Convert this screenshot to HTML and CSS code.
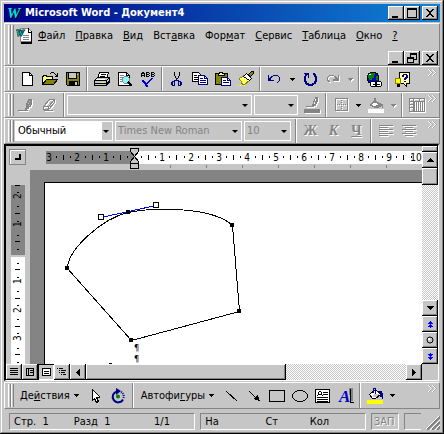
FILE: index.html
```html
<!DOCTYPE html>
<html lang="ru">
<head>
<meta charset="utf-8">
<title>Microsoft Word - Документ4</title>
<link rel="stylesheet" href="styles.css">
</head>
<body>
<div class="window">
  <header class="title">
    <svg class="logo" width="18" height="16" viewBox="0 0 18 16"><text x="2" y="14" class="w-shadow">W</text><text x="1" y="13" class="w-face">W</text></svg>
    <h1>Microsoft Word - Документ4</h1>
    <button class="cap" aria-label="Свернуть"><svg width="12" height="10"><path d="M2 8h6v2H2z"/></svg></button>
    <button class="cap" aria-label="Развернуть"><svg width="12" height="10"><path fill-rule="evenodd" d="M1 0h10v10H1zM2 2v7h8V2z"/></svg></button>
    <button class="cap close" aria-label="Закрыть"><svg width="12" height="10"><path d="M2 1h2v1h1v1h2V2h1V1h2v1H9v1H8v1H7v2h1v1h1v1h1v1H8V8H7V7H5v1H4v1H2V8h1V7h1V6h1V4H4V3H3V2H2z"/></svg></button>
  </header>

  <nav class="band menu-band">
    <span class="grip"></span>
    <div class="menu-rows">
      <div class="menu">
        <svg class="docicon" width="17" height="17" viewBox="0 0 17 17"><path fill="#fff" stroke="#848484" d="M4.500 1.500h8l3 3v10h-11z"/><path d="M12 1v4h4M15 4v12H5v-1h10" fill="none" stroke="#000"/><path stroke="#848484" d="M7 8.500h6M7 10.500h6M7 12.500h6"/><text x="0" y="9" class="w-small">W</text></svg>
        <button><u>Ф</u>айл</button><button><u>П</u>равка</button><button><u>В</u>ид</button><button>Вст<u>а</u>вка</button><button>Фор<u>м</u>ат</button><button><u>С</u>ервис</button><button><u>Т</u>аблица</button><button><u>О</u>кно</button><button><u>?</u></button>
      </div>
      <div class="mdi">
        <button class="cap" aria-label="Свернуть документ"><svg width="12" height="10"><path d="M2 8h6v2H2z"/></svg></button>
        <button class="cap" aria-label="Восстановить документ"><svg width="12" height="10"><path fill-rule="evenodd" d="M4 0h7v7H8v3H1V4h3zM5 2v2h3v2h2V2zM2 6v3h5V6z"/></svg></button>
        <button class="cap close" aria-label="Закрыть документ"><svg width="12" height="10"><path d="M2 1h2v1h1v1h2V2h1V1h2v1H9v1H8v1H7v2h1v1h1v1h1v1H8V8H7V7H5v1H4v1H2V8h1V7h1V6h1V4H4V3H3V2H2z"/></svg></button>
      </div>
    </div>
  </nav>

  <div class="band" role="toolbar" aria-label="Стандартная">
    <span class="grip"></span>
    <button class="tb" aria-label="Создать"><svg width="18" height="16"><path fill="#fff" stroke="#000" d="M4.500 1.500h7l3 3v10h-10z"/><path fill="none" stroke="#000" d="M11.500 1v3.500H15"/></svg></button>
    <button class="tb" aria-label="Открыть"><svg width="18" height="16"><path fill="#ffff80" stroke="#000" d="M1.500 13.500v-8h1v-1h3v1h6v3h5l-4 5z"/><path fill="#848400" stroke="#000" d="M1.500 13.500l4-5h11l-4 5z"/><path fill="none" stroke="#000" d="M9 2.500h1M10 1.500h3M13 2.500h1M14 3.500h1M15 4.500h1M14 5.500h2M16.500 2v4"/></svg></button>
    <button class="tb" aria-label="Сохранить"><svg width="18" height="16"><path fill="#848400" stroke="#000" d="M2.500 1.500h13v13h-12l-1-1z"/><path fill="#c6c6c6" stroke="#000" d="M4.500 1.500h8v6h-8z"/><path d="M5 10h9v5H5z"/><path fill="#c6c6c6" d="M11 11h2v3h-2zM13 3h1v1h-1z"/></svg></button>
    <span class="sep"></span>
    <button class="tb" aria-label="Печать"><svg width="18" height="16"><path fill="#fff" stroke="#000" d="M6.500 1.500h9l-2 6h-9z"/><path stroke="#000" d="M8 3.500h5M7 5.500h5"/><path fill="#c6c6c6" stroke="#000" d="M1.500 9.500l3-3h12v5l-3 3h-12z"/><path fill="none" stroke="#000" d="M1 9.500h12.500v5M13.500 9.500l3-3M1 12.500h12M14 12.500l3-3"/><path fill="#ffff00" d="M8 11h3v1H8z"/><path fill="#fff" d="M3 8h9v1H3z"/></svg></button>
    <button class="tb" aria-label="Предварительный просмотр"><svg width="18" height="17"><path fill="#fff" stroke="#000" d="M2.500 1.500h8l3 3v10h-11z"/><path fill="none" stroke="#000" d="M10.500 1v3.500H14"/><path stroke="#848484" d="M4 4.500h4M4 6.500h3M4 8.500h2M4 10.500h2"/><circle cx="10" cy="9" r="3.500" fill="#84ffff" stroke="#848484"/><path stroke="#000" stroke-width="2" d="M12 11l4 4"/></svg></button>
    <button class="tb" aria-label="Орфография"><svg width="18" height="17"><path fill="none" stroke="#000" d="M2.500 6V2.500h1v-1h1v1h1V6M2 4.500h4M7.500 1v5M7 1.500h3M7 3.500h3M7 5.500h3M10.500 2v1M10.500 4v1M12.500 1v5M12 1.500h3M12 3.500h3M12 5.500h3M15.500 2v1M15.500 4v1"/><path fill="#0000ce" d="M3 9h2v1h1v1h1v1h1v-1h1v-1h1V9h1V8h1V7h2v1h-1v1h-1v1h-1v1h-1v1h-1v1h-1v1H9v2H7v-1H6v-2H5v-1H4v-1H3z"/></svg></button>
    <span class="sep"></span>
    <button class="tb" aria-label="Вырезать"><svg width="18" height="16"><path fill="none" stroke="#000" d="M6.500 1v3l1 2 1 2M11.500 1v3l-1 2-2 3"/><path fill="none" stroke="#000084" d="M8.500 7v3M7.500 9l-1 1M9.500 9l1 1M4.500 10.500h2v4h-2zM10.500 10.500h2v4h-2zM3.500 11v3M13.500 11v3"/></svg></button>
    <button class="tb" aria-label="Копировать"><svg width="18" height="16"><path fill="#fff" stroke="#000" d="M1.500 1.500h6l2 2v7h-8z"/><path stroke="#000" d="M3 4.500h3M3 6.500h4M3 8.500h4"/><path fill="#fff" stroke="#000084" d="M7.500 4.500h6l3 3v6h-9z"/><path fill="none" stroke="#000084" d="M13.500 4v3.500H17M9 7.500h3M9 9.500h6M9 11.500h6"/></svg></button>
    <button class="tb" aria-label="Вставить"><svg width="18" height="16"><path fill="#848400" stroke="#000" d="M1.500 2.500h12v11h-12z"/><path fill="#ffff80" stroke="#000" d="M4.500 3.500v-1h1v-1h3v1h2v2h-6z"/><path fill="#fff" stroke="#000084" d="M7.500 6.500h6l3 3v5h-9z"/><path fill="none" stroke="#000084" d="M13.500 6v3.500H17M9 9.500h3M9 11.500h6"/></svg></button>
    <button class="tb" aria-label="Формат по образцу"><svg width="18" height="16"><path fill="#ffff84" stroke="#848400" d="M2.500 7.500l5-3 5 5-5 4h-2z"/><path fill="#fff" stroke="#000" d="M6.500 5.500l3-3 5 5-2 2z"/><path fill="#848400" stroke="#000" d="M11.500 3.500l3-3h2v2l-3 3z"/><path stroke="#ff0" stroke-dasharray="1 1" d="M3 8.500h7M3 10.500h7M1 14.500h7"/></svg></button>
    <span class="sep"></span>
    <button class="tb" aria-label="Отменить"><svg width="18" height="16"><path fill="#000084" d="M2 4h1v3h1V6h1V5h2V4h5v1h1v1h1v4h-1v1h-1v1h-1v-1h1v-1h1V6h-1V5H7v1H6v1H5v2h3v1H2z"/></svg></button>
    <button class="dd" aria-label="Список отмены"><svg width="5" height="3"><path d="M0 0h5L2.500 3z"/></svg></button>
    <button class="tb" aria-label="Повторить"><svg width="18" height="16"><path fill="#000084" d="M3 2h5v5H7V4H6v1H5v5h1v2h2v1h3v-1h2v-2h1V6h-1V4h-1V2h2v1h1v2h1v6h-1v2h-2v1h-1v1H7v-1H5v-1H4v-2H3V5h1V3H3z"/></svg></button>
    <button class="tb" aria-label="Вернуть" disabled><svg class="dis" width="18" height="16"><path d="M15 4h-1v3h-1V6h-1V5h-2V4H5v1H4v1H3v4h1v1h2v-1H5V9H4V6h1V5h5v1h1v2h-2v2h6z"/></svg></button>
    <button class="dd" aria-label="Список возврата" disabled><svg class="dis" width="5" height="3"><path d="M0 0h5L2.500 3z"/></svg></button>
    <span class="sep"></span>
    <button class="tb" aria-label="Гиперссылка"><svg width="18" height="17"><circle cx="8" cy="7" r="6" fill="#0000ce" stroke="#000"/><path fill="#008400" d="M5 2h5v2H9v3H7v2H4V7H3V4h2zM11 5h2v4h-2zM7 10h3v2H7z"/><path fill="#fff" d="M4 3h2v1H4z"/><path fill="#fff" stroke="#000" d="M5.500 11.500l1-1h4l1 1v3l-1 1h-4l-1-1zM10.500 11.500l1-1h4l1 1v3l-1 1h-4l-1-1z"/><path stroke="#000" d="M8 13.500h7"/></svg></button>
    <span class="sep"></span>
    <button class="tb" aria-label="Справка"><svg width="18" height="17"><path fill="#ffffb0" stroke="#000" d="M5.500 1.500h10v11h-3v3l-3-3h-4z"/><path fill="#000084" d="M9 3h4v1h1v3h-1v1h-1v1h-2V7h1V6h1V4h-2v2H8V4h1zM10 10h2v1h-2z"/><circle cx="4" cy="10" r="3" fill="#ff0" stroke="#848400"/><path d="M3 13h3v3H3z"/></svg></button>
    <button class="more" aria-label="Другие кнопки"><svg width="9" height="7"><path d="M0 0h1v1h1v1h1v1h1v1H3v1H2v1H1v1H0V6h1V5h1V4h1V3H2V2H1V1H0zM4 0h1v1h1v1h1v1h1v1H7v1H6v1H5v1H4V6h1V5h1V4h1V3H6V2H5V1H4z"/></svg></button>
  </div>

  <div class="band" role="toolbar" aria-label="Таблицы и границы">
    <span class="grip"></span>
    <button class="tb" aria-label="Нарисовать таблицу" disabled><svg class="dis" width="18" height="16"><path d="M11 2h4v6h-1v2h-2v2h-2v-1H9V6h1V4h1zM1 13h10v1H1zM8 11h2v2H8z"/><path fill="#c6c6c6" d="M12 4h1v1h-1zM11 6h1v1h-1zM12 8h1v1h-1z"/></svg></button>
    <button class="tb" aria-label="Ластик" disabled><svg class="dis" width="18" height="16"><path fill="none" stroke="#848484" d="M3.500 9.500l6-7h5v3l-6 7h-5zM3.500 9.500h5v3M8.500 9.500l6-7M4 13.500h9"/></svg></button>
    <span class="sep"></span>
    <span class="combo c-line"><select aria-label="Тип линии"><option></option></select></span>
    <span class="combo c-weight"><select aria-label="Толщина линии"><option></option></select></span>
    <button class="tb" aria-label="Цвет границы" disabled><svg class="dis" width="18" height="16"><path d="M12 0h3v5h-1v2h-1v2h-2v1H9V7h1V4h1V2h1zM3 9h6v1H3zM1 12h16v4H1z"/><path fill="#fff" d="M12 2h1v2h-1zM11 5h1v2h-1z"/></svg></button>
    <span class="sep"></span>
    <button class="tb" aria-label="Внешняя граница" disabled><svg class="dis" width="18" height="16"><path fill="none" stroke="#848484" d="M3.500 1.500h12v12h-12z"/><path stroke="#848484" stroke-dasharray="1 1" d="M9.500 3v10M5 7.500h10"/></svg></button>
    <button class="dd" aria-label="Выбор границы"><svg width="5" height="3"><path d="M0 0h5L2.500 3z"/></svg></button>
    <button class="tb" aria-label="Цвет заливки" disabled><svg width="18" height="17"><path fill="#848484" d="M7 1h2v3h1v1h2v1h2v1h2v4h-1V9h-1v1h-2v1h-5v-1H5V9H3V7h1V6h1V5h1V4h1z"/><path fill="#fff" d="M6 6h4v1h1v1H9v1H6V8H5V7h1zM1 12h16v4H1z"/></svg></button>
    <button class="dd" aria-label="Выбор заливки" disabled><svg class="dis" width="5" height="3"><path d="M0 0h5L2.500 3z"/></svg></button>
    <span class="sep"></span>
    <button class="tb" aria-label="Добавить таблицу" disabled><svg class="dis" width="18" height="16"><path fill="none" stroke="#848484" d="M1.500 1.500h15v13h-15zM1 4.500h15M5.500 1v13M11.500 1v4M1 7.500h4M1 10.500h4"/><path stroke="#848484" stroke-width="9" stroke-dasharray="1 1" d="M6 9.500h10"/></svg></button>
    <button class="more" aria-label="Другие кнопки"><svg width="9" height="7"><path d="M0 0h1v1h1v1h1v1h1v1H3v1H2v1H1v1H0V6h1V5h1V4h1V3H2V2H1V1H0zM4 0h1v1h1v1h1v1h1v1H7v1H6v1H5v1H4V6h1V5h1V4h1V3H6V2H5V1H4z"/></svg></button>
  </div>

  <div class="band" role="toolbar" aria-label="Форматирование">
    <span class="grip"></span>
    <span class="combo c-style on"><select aria-label="Стиль"><option>Обычный</option></select></span>
    <span class="combo c-font"><select aria-label="Шрифт" disabled><option>Times New Roman</option></select></span>
    <span class="combo c-size"><select aria-label="Размер" disabled><option>10</option></select></span>
    <span class="sep"></span>
    <button class="tb letter" disabled><b>Ж</b></button>
    <button class="tb letter" disabled><i>К</i></button>
    <button class="tb letter" disabled><u>Ч</u></button>
    <span class="sep"></span>
    <button class="tb" aria-label="По левому краю" disabled><svg class="dis" width="18" height="16"><path stroke="#848484" d="M2 2.500h14M2 4.500h9M2 6.500h14M2 8.500h9M2 10.500h14M2 12.500h9"/></svg></button>
    <button class="tb" aria-label="По центру" disabled><svg class="dis" width="18" height="16"><path stroke="#848484" d="M2 2.500h14M5 4.500h8M2 6.500h14M5 8.500h8M2 10.500h14M5 12.500h8"/></svg></button>
    <button class="more" aria-label="Другие кнопки"><svg width="9" height="7"><path d="M0 0h1v1h1v1h1v1h1v1H3v1H2v1H1v1H0V6h1V5h1V4h1V3H2V2H1V1H0zM4 0h1v1h1v1h1v1h1v1H7v1H6v1H5v1H4V6h1V5h1V4h1V3H6V2H5V1H4z"/></svg></button>
  </div>

  <main class="doc">
    <div class="corner"><button aria-label="Табуляция"><svg width="6" height="6"><path d="M4 0h2v6H0V4h4z"/></svg></button></div>
    <div class="hruler">
      <svg width="100%" height="24">
        <path fill="#848484" d="M16 5h89v13H16z"/><rect x="105" y="5" width="100%" height="13" fill="#fff"/>
        <path stroke="#000" d="M33.500 9v5M62.500 9v5M90.500 9v5M118.500 9v5M146.500 9v5M175.500 9v5M203.500 9v5M232.500 9v5M260.500 9v5M288.500 9v5M317.500 9v5M345.500 9v5M373.500 9v5"/>
        <path stroke="#000" stroke-width="2" d="M26 11h1M40 11h1M55 11h1M69 11h1M83 11h1M97 11h1M111 11h1M125 11h1M139 11h1M154 11h1M168 11h1M182 11h1M196 11h1M210 11h1M225 11h1M239 11h1M253 11h1M267 11h1M281 11h1M295 11h1M310 11h1M324 11h1M338 11h1M352 11h1M366 11h1M381 11h1"/>
        <path stroke="#848484" d="M140.500 19v3M176.500 19v3M212.500 19v3M248.500 19v3M284.500 19v3M320.500 19v3M356.500 19v3"/>
        <g class="num"><text x="19" y="15">3</text><text x="47" y="15">2</text><text x="76" y="15">1</text><text x="132" y="15">1</text><text x="161" y="15">2</text><text x="189" y="15">3</text><text x="217" y="15">4</text><text x="246" y="15">5</text><text x="274" y="15">6</text><text x="302" y="15">7</text><text x="331" y="15">8</text><text x="359" y="15">9</text><text x="386" y="15">10</text></g>
        <path fill="#c6c6c6" stroke="#000" d="M100.500 2.500h8v3l-4 5-4-5zM104.500 10.500l4 5v7h-8v-7zM100.500 17.500h8"/>
      </svg>
    </div>
    <div class="vruler">
      <svg width="24" height="100%">
        <path fill="#848484" d="M5 15h14v70H5z"/><rect x="5" y="87" width="14" height="100%" fill="#fff"/>
        <path stroke="#000" d="M9 15.500h5M9 43.500h5M9 71.500h5M9 99.500h5M9 128.500h5M9 156.500h5M9 184.500h5"/>
        <path stroke="#000" d="M11 22.500h2M11 36.500h2M11 51.500h2M11 65.500h2M11 79.500h2M11 93.500h2M11 107.500h2M11 121.500h2M11 135.500h2M11 149.500h2M11 163.500h2M11 178.500h2M11 192.500h2"/>
        <g class="num"><text transform="translate(15 29) rotate(-90)">2</text><text transform="translate(15 57) rotate(-90)">1</text><text transform="translate(15 114) rotate(-90)">1</text><text transform="translate(15 143) rotate(-90)">2</text><text transform="translate(15 171) rotate(-90)">3</text></g>
      </svg>
    </div>
    <div class="page-area">
      <div class="page">
        <svg class="drawing" width="100%" height="100%">
          <path fill="none" stroke="#000" d="M22.500 85.500C22.500 67 56 36 83 29.500C111 24 168 24 187.500 42.500L194.500 128.500L86.500 157.500z"/>
          <path stroke="#00f" d="M56 34.500L111 22.500"/>
          <path d="M20 83h4v4h-4zM81 27h4v4h-4zM185 40h4v4h-4zM192 126h4v4h-4zM84 155h4v4h-4z"/>
          <path fill="#fff" stroke="#000" d="M53.500 31.500h5v5h-5zM108.500 19.500h5v5h-5z"/>
          <text x="89" y="168" class="pil">¶</text><text x="89" y="179" class="pil">¶</text>
          <path fill="none" stroke="#000" d="M63 181.500h1M64 180.500h3M67 181.500h1"/>
        </svg>
      </div>
    </div>
    <div class="vscroll">
      <span class="split"></span>
      <button aria-label="Вверх"><svg width="7" height="4"><path d="M3 0h1v1h1v1h1v1h1v1H0V3h1V2h1V1h1z"/></svg></button>
      <span class="thumb"></span>
      <span class="track"></span>
      <button aria-label="Вниз"><svg width="7" height="4"><path d="M0 0h7v1H6v1H5v1H4v1H3V3H2V2H1V1H0z"/></svg></button>
      <button aria-label="Предыдущая страница"><svg width="5" height="7" fill="#00f"><path d="M2 0h1v1h1v1h1v1H3v1h1v1h1v1H3v1H2V6H0V5h1V4h1V3H0V2h1V1h1z"/></svg></button>
      <button aria-label="Выбор объекта"><svg class="smooth" width="8" height="8"><circle cx="4" cy="4" r="3" fill="#c6c6c6" stroke="#000"/><path fill="#fff" d="M2 2h2v2H2z"/></svg></button>
      <button aria-label="Следующая страница"><svg width="5" height="7" fill="#00f"><path d="M2 7h1V6h1V5h1V4H3V3h1V2h1V1H3V0H2v1H0v1h1v1h1v1H0v1h1v1h1z"/></svg></button>
    </div>
    <div class="hscroll">
      <button aria-label="Обычный режим"><svg width="10" height="10"><path stroke="#000" d="M1 1.500h8M1 3.500h8M1 5.500h8M1 7.500h8"/></svg></button>
      <button aria-label="Веб-документ"><svg width="10" height="10"><path fill="none" stroke="#000" d="M1.500 1.500h7v7h-7zM3.500 1v8M5 3.500h3M5 5.500h3"/></svg></button>
      <button class="pressed" aria-label="Разметка страницы"><svg width="10" height="10"><path fill="#fff" stroke="#000" d="M1.500 1.500h8v7h-8z"/><path stroke="#000" d="M3 4.500h5M3 6.500h5"/></svg></button>
      <button aria-label="Структура"><svg width="10" height="10"><path stroke="#000" d="M0 1.500h1M2 1.500h4M2 3.500h1M4 3.500h5M2 5.500h1M4 5.500h4M4 7.500h1M6 7.500h3"/></svg></button>
      <button aria-label="Влево"><svg width="4" height="7"><path d="M4 0v7H3V6H2V5H1V4H0V3h1V2h1V1h1V0z"/></svg></button>
      <span class="thumb"></span>
      <span class="track"></span>
      <button aria-label="Вправо"><svg width="4" height="7"><path d="M0 0v7h1V6h1V5h1V4h1V3H3V2H2V1H1V0z"/></svg></button>
      <span class="box"></span>
    </div>
  </main>

  <div class="band draw" role="toolbar" aria-label="Рисование">
    <span class="grip"></span>
    <button class="word"><span>Де<u>й</u>ствия</span><svg width="5" height="3"><path d="M0 0h5L2.500 3z"/></svg></button>
    <button class="tb" aria-label="Выбор объектов"><svg width="18" height="16"><path fill="#fff" stroke="#000" d="M6.500 1.500l7 7v1h-3l2 4-2 1-2-4-2 2z"/></svg></button>
    <button class="tb" aria-label="Свободное вращение"><svg class="smooth" width="18" height="16"><path fill="none" stroke="#000084" stroke-width="2" d="M8 3.500a5.500 5.500 0 1 0 6 8"/><path fill="none" stroke="#000084" stroke-width="2" stroke-dasharray="1 1" d="M12 4a5 5 0 0 1 2.500 6"/><path fill="#000084" d="M7 0l5 3-5 4z"/><circle cx="9" cy="8.500" r="2" fill="#008400"/></svg></button>
    <span class="sep"></span>
    <button class="word"><span>Автофи<u>г</u>уры</span><svg width="5" height="3"><path d="M0 0h5L2.500 3z"/></svg></button>
    <button class="tb" aria-label="Линия"><svg width="18" height="16"><path stroke="#000" d="M4 3l11 10"/></svg></button>
    <button class="tb" aria-label="Стрелка"><svg width="18" height="16"><path stroke="#000" d="M4 3l8 8"/><path d="M15 13l-2-6-5 4z"/></svg></button>
    <button class="tb" aria-label="Прямоугольник"><svg width="18" height="16"><path fill="none" stroke="#000" d="M1.500 2.500h15v11h-15z"/></svg></button>
    <button class="tb" aria-label="Овал"><svg width="18" height="16"><ellipse cx="9" cy="8" rx="7.500" ry="5.500" fill="none" stroke="#000"/></svg></button>
    <button class="tb" aria-label="Надпись"><svg width="18" height="16"><path fill="#fff" stroke="#000" d="M1.500 1.500h14v13h-14z"/><path stroke="#000" d="M9 4.500h5M9 6.500h5M3 9.500h11M3 11.500h11M3 13h11"/><path fill="none" stroke="#000" d="M3.500 8l2-5h1l2 5M4 6.500h4"/></svg></button>
    <button class="tb" aria-label="Объект WordArt"><svg width="18" height="17"><path fill="#848484" d="M12 1h4v13h-3z"/><text x="2" y="15" class="art">A</text><path d="M13 2h1v13h3v1h-4z"/></svg></button>
    <span class="sep"></span>
    <button class="tb" aria-label="Цвет заливки"><svg width="18" height="17"><path fill="#fff" stroke="#000" d="M3.500 7.500l6-5 5 5-5 4h-3z"/><path fill="#c6c6c6" d="M8 7h5l-3 3H7z"/><path fill="none" stroke="#000084" d="M7.500 6V1.500h2V7M11 4.500h4l1 2v5"/><path fill="#000084" d="M13 5h3v5h-2V7h-1z"/><path fill="#ff0" d="M1 13h16v4H1z"/></svg></button>
    <button class="dd" aria-label="Выбор заливки"><svg width="5" height="3"><path d="M0 0h5L2.500 3z"/></svg></button>
    <button class="more" aria-label="Другие кнопки"><svg width="9" height="7"><path d="M0 0h1v1h1v1h1v1h1v1H3v1H2v1H1v1H0V6h1V5h1V4h1V3H2V2H1V1H0zM4 0h1v1h1v1h1v1h1v1H7v1H6v1H5v1H4V6h1V5h1V4h1V3H6V2H5V1H4z"/></svg></button>
  </div>

  <footer class="status">
    <div class="pane p-page"><span>Стр.&nbsp; 1</span><span>Разд&nbsp; 1</span><span>1/1</span></div>
    <div class="pane p-pos"><span>На</span><span>Ст</span><span>Кол</span></div>
    <div class="pane p-rec">ЗАП</div>
    <div class="pane p-fix"></div>
    <svg class="sizer" width="14" height="14"><path stroke="#848484" stroke-width="2" d="M1 14L14 1M6 14l8-8M11 14l3-3"/><path stroke="#fff" d="M0 13L13 0M4 14L14 4M9 14l5-5"/></svg>
  </footer>
</div>
</body>
</html>
```
FILE: styles.css
```css
:root {
  --face: #c6c6c6;
  --dark: #848484;
}
* { box-sizing: border-box; }
body {
  margin: 0;
  font: 11px/16px "DejaVu Sans Condensed", "Liberation Sans", sans-serif;
  color: #000;
  background: var(--face);
}
svg { display: block; flex: none; shape-rendering: crispEdges; }
svg.smooth { shape-rendering: auto; }
button {
  margin: 0;
  padding: 0;
  border: 0;
  background: none;
  font: inherit;
  color: inherit;
  flex: none;
}
.window {
  display: flex;
  flex-direction: column;
  height: 100vh;
  padding: 4px;
  background: var(--face);
  box-shadow: inset -1px -1px #000, inset 1px 1px var(--face), inset -2px -2px var(--dark), inset 2px 2px #fff;
}

/* Title bar */
.title {
  display: flex;
  align-items: center;
  height: 18px;
  margin-bottom: 1px;
  padding: 0 2px;
  background: linear-gradient(90deg, #000084, #1084d6);
  color: #fff;
}
.title h1 {
  flex: 1;
  margin: 0 0 0 1px;
  font-size: 11px;
  line-height: 16px;
  white-space: nowrap;
}
.w-shadow, .w-face { font: italic bold 15px "Liberation Serif", serif; }
.w-face { fill: #00e0e0; }
.w-small { font: italic bold 9px "Liberation Serif", serif; fill: #00c0c0; stroke: #000; stroke-width: 1px; paint-order: stroke; }
.cap {
  display: grid;
  place-items: center;
  width: 16px;
  height: 14px;
  background: var(--face);
  box-shadow: inset -1px -1px #000, inset 1px 1px #fff, inset -2px -2px var(--dark);
}
.close { margin-left: 2px; }

/* Tool bands */
.band {
  display: flex;
  align-items: center;
  height: 26px;
  padding-left: 3px;
  border: 1px solid;
  border-color: #fff var(--dark) var(--dark) #fff;
}
.grip {
  width: 6px;
  align-self: stretch;
  margin: 1px 1px 1px 0;
  background: linear-gradient(90deg, #fff 0 1px, var(--face) 1px 2px, var(--dark) 2px 3px, #fff 3px 4px, var(--face) 4px 5px, var(--dark) 5px 6px);
}
.menu-band { height: 43px; }
.menu-rows { flex: 1; align-self: stretch; }
.menu, .mdi { display: flex; align-items: center; }
.menu { height: 23px; }
.menu button { padding: 0 5px; }
.docicon { margin: 0 0 0 1px; }
.mdi { justify-content: flex-end; height: 18px; padding: 4px 1px 0 0; }
.tb {
  display: grid;
  place-items: center;
  width: 23px;
  height: 22px;
}
.dd {
  display: grid;
  place-items: center;
  width: 12px;
  height: 22px;
}
.dis { fill: var(--dark); filter: drop-shadow(1px 1px 0 #fff); }
.sep {
  width: 2px;
  align-self: stretch;
  margin: 0 2px;
  background: linear-gradient(90deg, var(--dark) 50%, #fff 50%);
}
.more {
  align-self: flex-start;
  margin: 2px 2px 0 auto;
}
.more svg { fill: #fff; filter: drop-shadow(1px 0 0 #a5a5a5); }
.combo {
  position: relative;
  height: 20px;
  margin-right: 2px;
  border: 1px solid #fff;
}
.combo::after {
  content: "";
  position: absolute;
  right: 3px;
  top: 8px;
  border: 3px solid transparent;
  border-top: 3px solid #000;
  border-bottom: 0;
  pointer-events: none;
}
.combo select {
  appearance: none;
  display: block;
  width: 100%;
  height: 100%;
  padding: 0 2px;
  border: 0;
  border-radius: 0;
  background: none;
  font: inherit;
  color: #000;
  opacity: 1;
}
.combo select:disabled { color: var(--dark); }
.on { background: linear-gradient(90deg, #fff calc(100% - 10px), var(--face) 0); }
.c-line { width: 187px; }
.c-weight { width: 44px; }
.c-style { width: 98px; }
.c-font { width: 127px; }
.c-size { width: 47px; }
.letter {
  font: bold 14px/20px "Liberation Serif", serif;
  color: var(--dark);
  text-shadow: 1px 1px #fff;
}

/* Document window */
.doc {
  flex: 1;
  min-height: 0;
  display: grid;
  grid-template: 24px minmax(0, 1fr) 16px / 24px minmax(0, 1fr) 16px;
  margin-right: 1px;
  border: 1px solid #000;
  border-width: 2px 1px 1px 2px;
  border-color: #000 #fff #fff #000;
}
.doc > * { min-width: 0; min-height: 0; overflow: hidden; }
.corner { padding: 3px; }
.corner button {
  display: grid;
  place-items: center;
  width: 17px;
  height: 16px;
  border: 1px solid var(--dark);
  box-shadow: inset 1px 1px #fff;
}
.num text { font: 10px "DejaVu Sans Condensed", sans-serif; text-anchor: middle; }
.vruler .num text { text-anchor: start; }
.vruler { grid-area: 2 / 1; }
.page-area { grid-area: 2 / 2; padding: 12px 0 0 14px; background: var(--dark); }
.page { height: 100%; border: 1px solid #000; border-width: 1px 0 0 1px; background: #fff; }
.pil { font: 9px "DejaVu Sans Condensed", sans-serif; }
.vscroll { grid-area: 1 / 3 / 3 / 4; display: flex; flex-direction: column; }
.hscroll { grid-area: 3 / 1 / 4 / 4; display: flex; }
.vscroll button, .hscroll button {
  display: grid;
  place-items: center;
  width: 16px;
  height: 16px;
}
.vscroll button, .hscroll button, .thumb, .split {
  background: var(--face);
  box-shadow: inset -1px -1px #000, inset 1px 1px #fff, inset -2px -2px var(--dark);
}
.hscroll .pressed { box-shadow: inset 1px 1px #000, inset -1px -1px #fff; }
.split { height: 6px; }
.vscroll .thumb { height: 17px; }
.hscroll .thumb { flex: 200 1 0; }
.hscroll .track { flex: 120 1 0; }
.track {
  flex: 1;
  background: repeating-conic-gradient(#fff 0 25%, var(--face) 0 50%) 0 0 / 2px 2px;
}
.box { width: 16px; }

/* Drawing bar */
.draw { height: 27px; margin-top: 1px; }
.word { display: flex; align-items: center; gap: 4px; padding: 0 5px; }

.art { font: italic bold 17px "Liberation Serif", serif; fill: #0000ce; }

/* Status bar */
.status {
  display: flex;
  align-items: flex-end;
  gap: 5px;
  height: 21px;
  padding-left: 5px;
}
.pane {
  height: 17px;
  padding: 0 4px;
  border: 1px solid;
  border-color: var(--dark) #fff #fff var(--dark);
  white-space: nowrap;
}
.p-page, .p-pos { display: grid; }
.p-page { flex: 188 1 0; grid-template-columns: 61fr 82fr 37fr; }
.p-pos { flex: 166 1 0; grid-template-columns: 61fr 45fr 52fr; }
.p-rec { width: 28px; padding: 0 2px; color: var(--dark); text-shadow: 1px 1px #fff; }
.p-fix { width: 17px; border-right: 0; }
```
